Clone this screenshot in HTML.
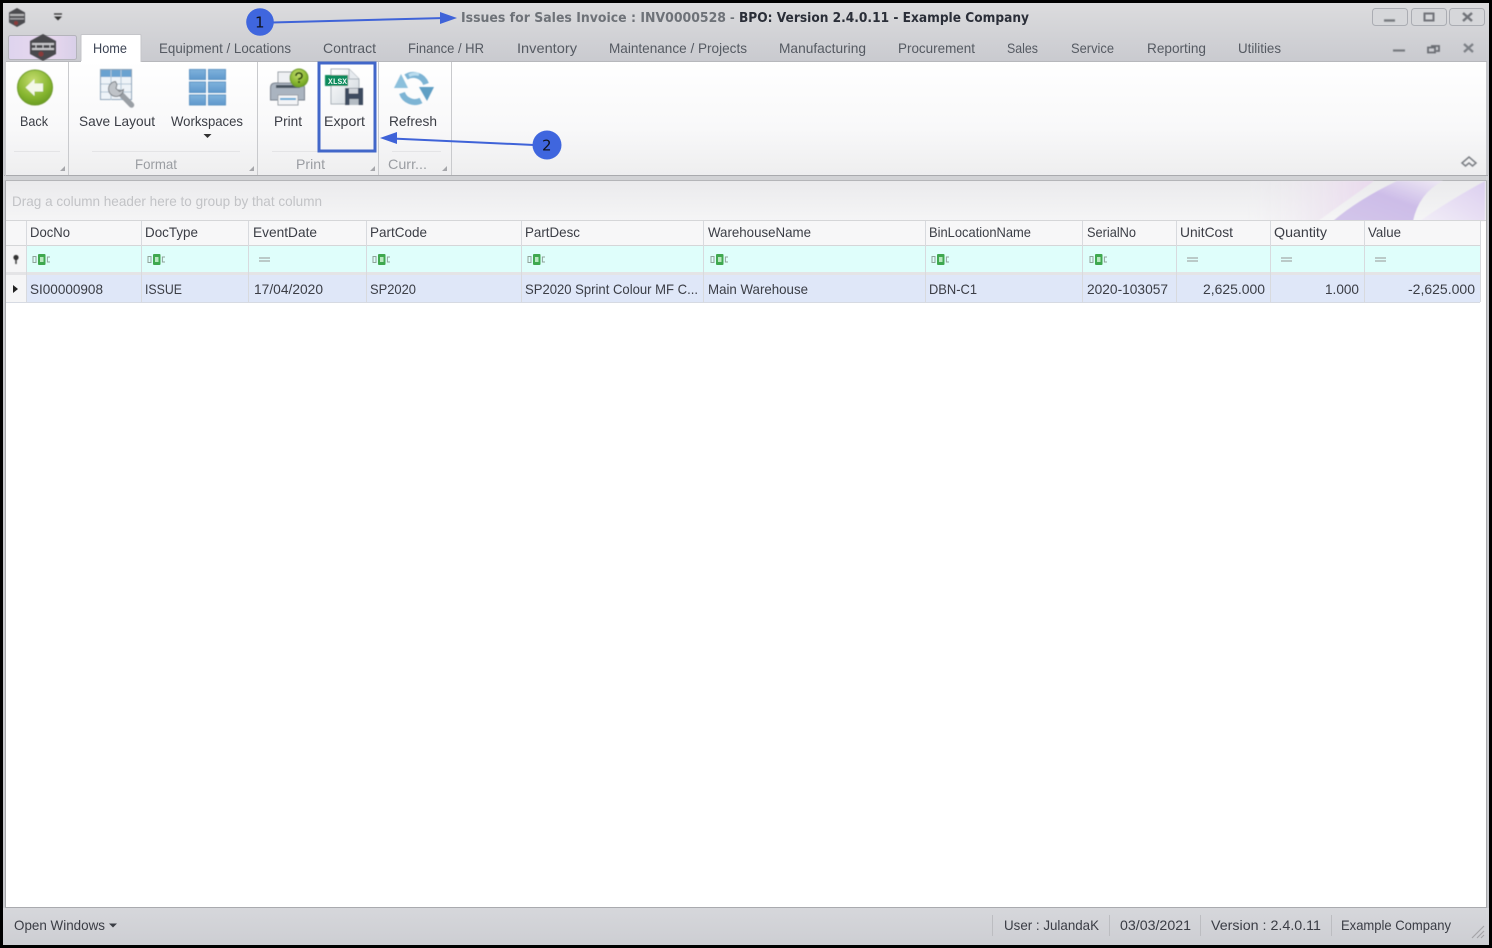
<!DOCTYPE html>
<html><head><meta charset="utf-8"><title>Issues for Sales Invoice</title>
<style>
html,body{margin:0;padding:0;width:1492px;height:948px;overflow:hidden;background:#000}
svg{display:block}
text{font-family:"Liberation Sans",sans-serif;font-size:14px;fill:#3d4048;filter:url(#s)}
.tab{fill:#555a62}
.grp{fill:#9a9da2}
.g{fill:#3a3d45}
</style></head><body>
<svg width="1492" height="948" viewBox="0 0 1492 948" xmlns="http://www.w3.org/2000/svg">
<defs>
<filter id="s" x="-5%" y="-20%" width="110%" height="140%"><feGaussianBlur stdDeviation="0.3"/></filter>
<filter id="b" x="-10%" y="-10%" width="120%" height="120%"><feGaussianBlur stdDeviation="0.5"/></filter>
<linearGradient id="tb" x1="0" y1="0" x2="0" y2="1"><stop offset="0" stop-color="#dcdcde"/><stop offset="1" stop-color="#c9cacf"/></linearGradient>
<linearGradient id="rb" x1="0" y1="0" x2="0" y2="1"><stop offset="0" stop-color="#ffffff"/><stop offset=".6" stop-color="#f8f8f9"/><stop offset="1" stop-color="#eeeeef"/></linearGradient>
<linearGradient id="gp" x1="0" y1="0" x2="0" y2="1"><stop offset="0" stop-color="#eaeaec"/><stop offset="1" stop-color="#f5f5f6"/></linearGradient>
<linearGradient id="st" x1="0" y1="0" x2="0" y2="1"><stop offset="0" stop-color="#d6d7db"/><stop offset="1" stop-color="#cdced3"/></linearGradient>
<radialGradient id="gr" cx=".45" cy=".3" r=".8"><stop offset="0" stop-color="#c4dc6e"/><stop offset=".6" stop-color="#86b52f"/><stop offset="1" stop-color="#5f9320"/></radialGradient>
<linearGradient id="lo" x1="0" y1="0" x2="1" y2="0"><stop offset="0" stop-color="#ded4ee"/><stop offset=".6" stop-color="#e8d8ef"/><stop offset="1" stop-color="#d8cfe8"/></linearGradient>
<linearGradient id="bl" x1="0" y1="0" x2="0" y2="1"><stop offset="0" stop-color="#7fb2dc"/><stop offset="1" stop-color="#5f98cc"/></linearGradient>
<linearGradient id="pp" x1="0" y1="0" x2="1" y2="0"><stop offset="0" stop-color="#f1f1f3" stop-opacity="0"/><stop offset="1" stop-color="#ead9ee"/></linearGradient>
<linearGradient id="lv" x1="0" y1="1" x2="1" y2="0"><stop offset="0" stop-color="#d3c6ea"/><stop offset=".55" stop-color="#cdbde8"/><stop offset="1" stop-color="#efeaf5"/></linearGradient>
<linearGradient id="lw" x1="0" y1="1" x2="1" y2="0"><stop offset="0" stop-color="#f2eef7"/><stop offset="1" stop-color="#dccff0"/></linearGradient>
<linearGradient id="doc" x1="0" y1="0" x2="1" y2="1"><stop offset="0" stop-color="#ffffff"/><stop offset="1" stop-color="#cfd6dc"/></linearGradient>
<g id="abc"><rect x="6" y="0" width="7.5" height="11" rx="1" fill="#3fa84f"/><rect x="8" y="3" width="3.5" height="5" fill="#b8e8c0"/><rect x="1" y="2.5" width="3" height="6" fill="none" stroke="#8fa39a" stroke-width="1"/><path d="M18 3h-2.600v5h2.600" fill="none" stroke="#8fa39a" stroke-width="1"/></g>
<path id="eq" d="M0 0h11M0 3h11" stroke="#a4abaa" stroke-width="1.200" fill="none"/>
</defs>

<!-- window frame -->
<rect width="1492" height="948" fill="#000"/>
<rect x="3" y="3" width="1486" height="942" fill="#c9cace"/>
<rect x="3" y="3" width="1486" height="59" fill="url(#tb)"/>

<!-- title icon -->
<g filter="url(#b)">
<path d="M17 8l8 4.500v10L17 27l-8-4.500v-10z" fill="#4c4c50"/>
<rect x="10" y="14" width="14" height="2" fill="#b5b5b8"/><rect x="10" y="18" width="14" height="1.500" fill="#a0a0a4"/>
<circle cx="16" cy="23" r="2" fill="#8a3a3a"/>
<path d="M54 14h8" stroke="#333" stroke-width="1.300"/><path d="M54 16.500h8l-4 4z" fill="#333"/>
</g>

<!-- title -->
<text x="461" y="22" textLength="265" lengthAdjust="spacingAndGlyphs" style="font-family:'DejaVu Sans',sans-serif;font-weight:700;font-size:13px;fill:#6e7278">Issues for Sales Invoice : INV0000528</text>
<text x="730" y="22" style="font-weight:700;fill:#6e7278;font-size:14px">-</text>
<text x="739" y="22" textLength="290" lengthAdjust="spacingAndGlyphs" style="font-family:'DejaVu Sans',sans-serif;font-weight:700;font-size:13px;fill:#2c2f38">BPO: Version 2.4.0.11 - Example Company</text>

<!-- window buttons -->
<g fill="#d6d7da" stroke="#abadb3">
<rect x="1372.500" y="8.500" width="35" height="17" rx="3"/><rect x="1411.500" y="8.500" width="35" height="17" rx="3"/><rect x="1449.500" y="8.500" width="35" height="17" rx="3"/>
</g>
<g filter="url(#b)">
<path d="M1384 20.500h11" stroke="#777a80" stroke-width="2.400"/>
<rect x="1424.500" y="13.500" width="9" height="7" fill="none" stroke="#6f7278" stroke-width="2"/>
<path d="M1463 13l9 8M1472 13l-9 8" stroke="#6f7278" stroke-width="2.400"/>
<path d="M1393 50.500h12" stroke="#777a80" stroke-width="2.200"/>
<path d="M1431 46h8v5h-3M1428 47.500h7v5h-7z" fill="none" stroke="#6a6d73" stroke-width="1.800"/>
<path d="M1464 44l9 8M1473 44l-9 8" stroke="#7c7f85" stroke-width="2.200"/>
</g>

<!-- app button -->
<rect x="8.500" y="35.500" width="68" height="24" rx="2" fill="url(#lo)" stroke="#b4b4bb"/>
<g filter="url(#b)">
<path d="M43 34l13 7v13l-13 7-13-7V41z" fill="#4a4a4e"/>
<rect x="32" y="43" width="22" height="2" fill="#c8c8cb"/><rect x="32" y="48" width="22" height="2" fill="#c8c8cb"/>
<path d="M36 43v7M43 43v7M50 43v7" stroke="#c8c8cb"/>
<circle cx="41" cy="54" r="2.500" fill="#8a3a3a"/>
</g>

<!-- ribbon -->
<rect x="6" y="61" width="1480" height="114" fill="url(#rb)"/>
<path d="M5 61.500H81M141 61.500H1487" stroke="#b7b8bc"/>
<path d="M81 61V35.500q0-1 1-1h58q1 0 1 1V62" fill="#fff" stroke="#c4c5c9"/>
<rect x="82" y="58" width="58" height="6" fill="#fff"/>
<rect x="3" y="175" width="1486" height="5" fill="#d1d2d5"/>
<path d="M4 175.500H1488" stroke="#a9aaae"/>
<path d="M5.500 61V176M68.500 62V175M257.500 62V175M378.500 62V175M451.500 62V175" stroke="#c9cacd"/>
<path d="M14 151.500H60M92 151.500H240M272 151.500H362M392 151.500H441" stroke="#e4e4e6"/>
<path d="M65 166v5h-5zM254 166v5h-5zM375 166v5h-5zM447 166v5h-5z" fill="#a6a7ab"/>

<!-- Tabs -->
<text x="93" y="53" textLength="34" lengthAdjust="spacingAndGlyphs" style="fill:#3d4454">Home</text>
<text class="tab" x="159" y="53" textLength="132" lengthAdjust="spacingAndGlyphs">Equipment / Locations</text>
<text class="tab" x="323" y="53" textLength="53" lengthAdjust="spacingAndGlyphs">Contract</text>
<text class="tab" x="408" y="53" textLength="76" lengthAdjust="spacingAndGlyphs">Finance / HR</text>
<text class="tab" x="517" y="53" textLength="60" lengthAdjust="spacingAndGlyphs">Inventory</text>
<text class="tab" x="609" y="53" textLength="138" lengthAdjust="spacingAndGlyphs">Maintenance / Projects</text>
<text class="tab" x="779" y="53" textLength="87" lengthAdjust="spacingAndGlyphs">Manufacturing</text>
<text class="tab" x="898" y="53" textLength="77" lengthAdjust="spacingAndGlyphs">Procurement</text>
<text class="tab" x="1007" y="53" textLength="31" lengthAdjust="spacingAndGlyphs">Sales</text>
<text class="tab" x="1071" y="53" textLength="43" lengthAdjust="spacingAndGlyphs">Service</text>
<text class="tab" x="1147" y="53" textLength="59" lengthAdjust="spacingAndGlyphs">Reporting</text>
<text class="tab" x="1238" y="53" textLength="43" lengthAdjust="spacingAndGlyphs">Utilities</text>

<!-- Ribbon labels -->
<text class="g" x="20" y="126" textLength="28" lengthAdjust="spacingAndGlyphs">Back</text>
<text class="g" x="79" y="126" textLength="76" lengthAdjust="spacingAndGlyphs">Save Layout</text>
<text class="g" x="171" y="126" textLength="72" lengthAdjust="spacingAndGlyphs">Workspaces</text>
<path d="M203.500 134h8l-4 4z" fill="#333"/>
<text class="g" x="274" y="126" textLength="28" lengthAdjust="spacingAndGlyphs">Print</text>
<text class="g" x="324" y="126" textLength="41" lengthAdjust="spacingAndGlyphs">Export</text>
<text class="g" x="389" y="126" textLength="48" lengthAdjust="spacingAndGlyphs">Refresh</text>
<text class="grp" x="135" y="169" textLength="42" lengthAdjust="spacingAndGlyphs">Format</text>
<text class="grp" x="296" y="169" textLength="29" lengthAdjust="spacingAndGlyphs">Print</text>
<text class="grp" x="388" y="169" textLength="39" lengthAdjust="spacingAndGlyphs">Curr...</text>

<!-- Icons -->
<g filter="url(#b)">
<!-- back -->
<circle cx="35" cy="87.500" r="17.500" fill="url(#gr)" stroke="#6d9a2a"/>
<path d="M25.500 87.500l9-8.500v4.500h8.500v8H34.500V96z" fill="#f4f8e8"/>
<!-- save layout -->
<rect x="100.500" y="69.500" width="31" height="30" fill="#eef3f8" stroke="#8ba3b8"/>
<rect x="101" y="70" width="30" height="7" fill="#6aa2d0"/>
<path d="M111 70v30M121 70v30M101 84h30M101 92h30" stroke="#b3c6d6"/>
<path d="M119 92l12.500 13" stroke="#9a9fa5" stroke-width="5.500" stroke-linecap="round"/>
<path d="M115.500 81.500a7.500 7.500 0 1 0 8 8l-4 2-3.500-3 1-4z" fill="#bfc3c8" stroke="#7a7f85"/>
<!-- workspaces -->
<g fill="url(#bl)" stroke="#5f94c4">
<rect x="189.500" y="69.500" width="16" height="10"/><rect x="208.500" y="69.500" width="17" height="10"/>
<rect x="189.500" y="82" width="16" height="10.500"/><rect x="208.500" y="82" width="17" height="10.500"/>
<rect x="189.500" y="95" width="16" height="10"/><rect x="208.500" y="95" width="17" height="10"/>
</g>
<!-- print -->
<rect x="278" y="72" width="20" height="15" fill="#eef0f3" stroke="#9aa0a8"/>
<path d="M270.500 88q0-5 5-5h23q6 0 6 5v12h-34z" fill="#aab4c0" stroke="#77808c"/>
<rect x="276" y="85" width="24" height="3" fill="#47525f"/>
<rect x="278" y="95" width="20" height="10" fill="#f3f4f6" stroke="#9aa0a8"/>
<path d="M280 99h16" stroke="#62a8d4" stroke-width="2"/>
<circle cx="299" cy="78" r="9" fill="url(#gr)" stroke="#6d9a2a"/>
<path d="M296 76q0-3 3-3t3 3q0 2-3 3v1" fill="none" stroke="#2d4a10" stroke-width="1.800"/><rect x="298" y="81" width="2" height="2" fill="#2d4a10"/>
<!-- export -->
<path d="M331 69h18l10 10v25h-28z" fill="url(#doc)" stroke="#a7b0b8"/>
<path d="M349 69v10h10" fill="#e6eaee" stroke="#a7b0b8"/>
<rect x="325" y="75" width="23" height="11" fill="#0e8a5c"/>
<rect x="345" y="88" width="18" height="17" fill="#3c4b5e"/>
<rect x="349" y="88.500" width="9" height="5" fill="#cfd4d9"/><rect x="349.500" y="99" width="9" height="6" fill="#b4bcc4"/>
<!-- refresh -->
<g fill="none" stroke="#7db4d4" stroke-width="6">
<path d="M406 77A13.500 13.500 0 0 1 426 84"/>
<path d="M402 93A13.500 13.500 0 0 0 421 100.500"/>
</g>
<path d="M409 75.500A13.500 13.500 0 0 1 419 74.500" fill="none" stroke="#b9dcee" stroke-width="3"/>
<path d="M419 87h15l-7 14z" fill="#5f9fc4"/>
<path d="M394 88h14l-7-14z" fill="#8cc0dc"/>
<!-- collapse chevrons -->
<path d="M1462 163l7-6 7 6-3.500 3-3.500-3-3.500 3z" fill="none" stroke="#7c7f84" stroke-width="1.500"/>
</g>
<text x="328" y="84" textLength="19" lengthAdjust="spacingAndGlyphs" style="font-family:'Liberation Mono',monospace;font-size:8px;font-weight:700;fill:#e8f6ef;filter:none">XLSX</text>

<!-- Grid area -->
<rect x="6" y="180" width="1480" height="728" fill="#fff"/>
<rect x="6" y="180" width="1480" height="41" fill="url(#gp)"/>
<path d="M5.500 180V908M1486.500 180V908" stroke="#a8a9ac"/>
<path d="M5 180.500H1487" stroke="#b4b5b8"/>
<!-- group panel art -->
<g filter="url(#b)">
<path d="M1240 181h134l-56 40h-78z" fill="url(#pp)"/>
<path d="M1333 221q26-22 64-40h46q-24 12-30 40z" fill="url(#lv)"/>
<path d="M1420 221q28-20 65-40v40z" fill="url(#lw)"/>
</g>
<text x="12" y="206" textLength="310" lengthAdjust="spacingAndGlyphs" style="fill:#c2c3c6">Drag a column header here to group by that column</text>

<!-- header row -->
<rect x="6" y="221" width="1474" height="25" fill="#f7f7f8"/>
<path d="M6 220.500H1486M6 245.500H1480" stroke="#d5d6d8"/>
<!-- filter row -->
<rect x="26" y="246" width="1454" height="26" fill="#dffefb"/>
<rect x="6" y="246" width="20" height="26" fill="#f5f5f6"/>
<rect x="6" y="272" width="1474" height="3" fill="#e4e4e6"/>
<!-- data row -->
<rect x="26" y="275" width="1454" height="27" fill="#dfe7f8"/>
<rect x="6" y="275" width="20" height="27" fill="#f5f5f6"/>
<path d="M6 302.500H1480" stroke="#d6dae2"/>
<!-- col separators -->
<path d="M26.500 221V302M141.500 221V302M248.500 221V302M366.500 221V302M521.500 221V302M703.500 221V302M925.500 221V302M1082.500 221V302M1176.500 221V302M1270.500 221V302M1364.500 221V302M1480.500 221V302" stroke="#d8dade"/>
<path d="M13 285l5 4-5 4z" fill="#222"/>
<g filter="url(#b)"><circle cx="16" cy="257.500" r="2.600" fill="#333"/><path d="M16 259v5" stroke="#333" stroke-width="1.400"/></g>

<!-- headers -->
<text class="g" x="30" y="237" textLength="40" lengthAdjust="spacingAndGlyphs">DocNo</text>
<text class="g" x="145" y="237" textLength="53" lengthAdjust="spacingAndGlyphs">DocType</text>
<text class="g" x="253" y="237" textLength="64" lengthAdjust="spacingAndGlyphs">EventDate</text>
<text class="g" x="370" y="237" textLength="57" lengthAdjust="spacingAndGlyphs">PartCode</text>
<text class="g" x="525" y="237" textLength="55" lengthAdjust="spacingAndGlyphs">PartDesc</text>
<text class="g" x="708" y="237" textLength="103" lengthAdjust="spacingAndGlyphs">WarehouseName</text>
<text class="g" x="929" y="237" textLength="102" lengthAdjust="spacingAndGlyphs">BinLocationName</text>
<text class="g" x="1087" y="237" textLength="49" lengthAdjust="spacingAndGlyphs">SerialNo</text>
<text class="g" x="1180" y="237" textLength="53" lengthAdjust="spacingAndGlyphs">UnitCost</text>
<text class="g" x="1274" y="237" textLength="53" lengthAdjust="spacingAndGlyphs">Quantity</text>
<text class="g" x="1368" y="237" textLength="33" lengthAdjust="spacingAndGlyphs">Value</text>

<!-- filter icons -->
<use href="#abc" x="32" y="254"/><use href="#abc" x="147" y="254"/><use href="#abc" x="372" y="254"/><use href="#abc" x="527" y="254"/><use href="#abc" x="710" y="254"/><use href="#abc" x="931" y="254"/><use href="#abc" x="1089" y="254"/>
<use href="#eq" x="259" y="258"/><use href="#eq" x="1187" y="258"/><use href="#eq" x="1281" y="258"/><use href="#eq" x="1375" y="258"/>

<!-- row -->
<text class="g" x="30" y="294" textLength="73" lengthAdjust="spacingAndGlyphs">SI00000908</text>
<text class="g" x="145" y="294" textLength="37" lengthAdjust="spacingAndGlyphs">ISSUE</text>
<text class="g" x="254" y="294" textLength="69" lengthAdjust="spacingAndGlyphs">17/04/2020</text>
<text class="g" x="370" y="294" textLength="46" lengthAdjust="spacingAndGlyphs">SP2020</text>
<text class="g" x="525" y="294" textLength="173" lengthAdjust="spacingAndGlyphs">SP2020 Sprint Colour MF C...</text>
<text class="g" x="708" y="294" textLength="100" lengthAdjust="spacingAndGlyphs">Main Warehouse</text>
<text class="g" x="929" y="294" textLength="48" lengthAdjust="spacingAndGlyphs">DBN-C1</text>
<text class="g" x="1087" y="294" textLength="81" lengthAdjust="spacingAndGlyphs">2020-103057</text>
<text class="g" x="1203" y="294" textLength="62" lengthAdjust="spacingAndGlyphs">2,625.000</text>
<text class="g" x="1325" y="294" textLength="34" lengthAdjust="spacingAndGlyphs">1.000</text>
<text class="g" x="1408" y="294" textLength="67" lengthAdjust="spacingAndGlyphs">-2,625.000</text>

<!-- status bar -->
<rect x="3" y="908" width="1486" height="37" fill="url(#st)"/>
<path d="M5 907.500H1487" stroke="#a9aaae"/>
<text class="g" x="14" y="930" textLength="91" lengthAdjust="spacingAndGlyphs">Open Windows</text>
<path d="M109 923.500h8l-4 4z" fill="#3a3d44"/>
<path d="M992.500 915V936M1109.500 915V936M1200.500 915V936M1331.500 915V936" stroke="#bcbdc1"/>
<text class="g" x="1004" y="930" textLength="95" lengthAdjust="spacingAndGlyphs">User : JulandaK</text>
<text class="g" x="1120" y="930" textLength="71" lengthAdjust="spacingAndGlyphs">03/03/2021</text>
<text class="g" x="1211" y="930" textLength="110" lengthAdjust="spacingAndGlyphs">Version : 2.4.0.11</text>
<text class="g" x="1341" y="930" textLength="110" lengthAdjust="spacingAndGlyphs">Example Company</text>
<path d="M1472 938l12-12M1477 938l7-7M1481 938l3-3" stroke="#a4a5a9" stroke-width="1.200"/>

<!-- annotations -->
<rect x="319" y="63" width="56" height="88" fill="none" stroke="#4267c9" stroke-width="3"/>
<path d="M272 22.500L445 18" stroke="#3f63d8" stroke-width="2"/>
<path d="M457 18l-17-6v12z" fill="#3f63d8"/>
<circle cx="260" cy="22" r="13.800" fill="#3f66de"/>
<text x="255" y="27.500" style="font-size:15px;fill:#10131c;filter:none;font-family:'DejaVu Sans',sans-serif">1</text>
<path d="M534 145L392 138.500" stroke="#3f63d8" stroke-width="2"/>
<path d="M380 138l17-6v12z" fill="#3f63d8"/>
<circle cx="547" cy="145" r="14.500" fill="#3f66de"/>
<text x="542" y="150.500" style="font-size:15px;fill:#10131c;filter:none;font-family:'DejaVu Sans',sans-serif">2</text>
</svg>
</body></html>
